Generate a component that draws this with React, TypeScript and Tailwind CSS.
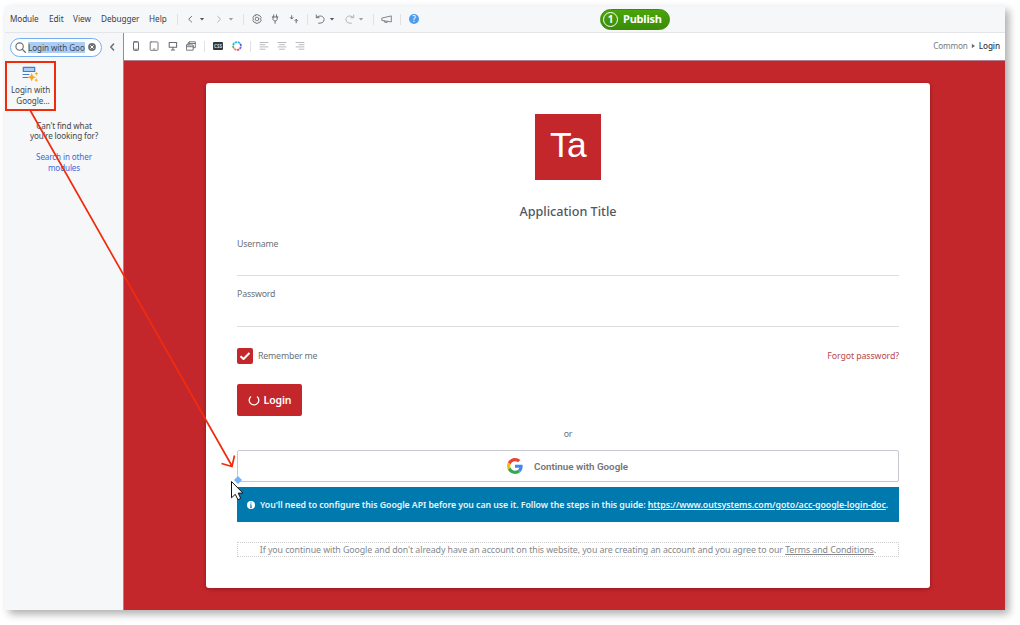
import type { ReactNode } from "react";

function Icon({ children, className = "", w = 10, h = 10, box }: { children: ReactNode; className?: string; w?: number; h?: number; box?: string }) {
  return (
    <svg width={w} height={h} viewBox={box ?? `0 0 ${w} ${h}`} fill="none" stroke="currentColor" strokeLinecap="round" strokeLinejoin="round" className={`shrink-0 ${className}`}>
      {children}
    </svg>
  );
}

const Sep = ({ className = "" }: { className?: string }) => <span className={`h-[11px] w-px shrink-0 bg-[#dfe1e4] ${className}`} />;

const Caret = ({ className = "" }: { className?: string }) => (
  <Icon w={6} h={6} className={className}>
    <path d="M.8 2h4.4L3 4.6z" fill="currentColor" stroke="none" />
  </Icon>
);

function MenuBar() {
  return (
    <header className="flex h-[27px] shrink-0 items-center border-b border-[#e3e5e8] bg-[#f6f7f9] pl-[5px] text-[8.2px] text-[#3d4045]">
      <span className="w-[39px] tracking-[-0.1px]">Module</span>
      <span className="w-[24px]">Edit</span>
      <span className="w-[28px]">View</span>
      <span className="w-[48px] tracking-[-0.05px]">Debugger</span>
      <span className="w-[28px]">Help</span>
      <Sep />
      <Icon className="ml-[7px] text-[#70747a]"><path d="M6.6 2.4 3.7 5.2l2.9 2.8" /></Icon>
      <Caret className="ml-[4px] text-[#55585d]" />
      <Icon className="ml-[9px] text-[#aeb1b5]"><path d="M3.7 2.4 6.6 5.2 3.7 8" /></Icon>
      <Caret className="ml-[4px] text-[#9b9ea2]" />
      <Sep className="ml-[9px]" />
      <Icon className="ml-[8px] text-[#707378]">
        <path d="M3.8.7h2.4l.5 1.1 1.3-.1 1.2 2-.7 1.3.7 1.3-1.2 2-1.3-.1-.5 1.1H3.8l-.5-1.1-1.3.1-1.2-2L1.5 5 .8 3.7l1.2-2 1.3.1z" strokeWidth=".9" />
        <circle cx="5" cy="5" r="1.8" strokeWidth=".9" />
      </Icon>
      <Icon className="ml-[8px] text-[#6a6d72]">
        <path d="M3.7.8v2M6.5.8v2M2.3 3h5.6M3 3v2.1c0 2.5 4.2 2.5 4.2 0V3M5.1 7v2.4" strokeWidth=".95" />
      </Icon>
      <Icon className="ml-[9px] text-[#606368]">
        <path d="M2.7 1.7v3M1.3 3.6l1.4 1.4 1.4-1.4M7.2 8.8V5.6M5.8 6.7l1.4-1.4 1.4 1.4" strokeWidth=".95" />
      </Icon>
      <Sep className="ml-[8px]" />
      <Icon className="ml-[7px] text-[#707378]">
        <path d="M1.3 1v2.7h2.7M1.5 3.5C5 .4 9.3 2.4 9.1 5.7 8.9 8.6 6 9.5 3.6 9.2" />
      </Icon>
      <Caret className="ml-[4px] text-[#55585d]" />
      <Icon className="ml-[10px] text-[#b1b4b8]">
        <path d="M8.7 1v2.7H6M8.5 3.5C5 .4.7 2.4.9 5.7 1.1 8.6 4 9.5 6.4 9.2" />
      </Icon>
      <Caret className="ml-[3px] text-[#9b9ea2]" />
      <Sep className="ml-[9px]" />
      <Icon w={12} className="ml-[7px] text-[#7b7e83]">
        <path d="M1.2 4 10.3 1.9v6L1.2 6.5zM3.2 6.8l.5 1.5 2.4.2.2-1.2" strokeWidth=".95" />
      </Icon>
      <Sep className="ml-[7px]" />
      <span className="ml-[8px] flex size-[10px] shrink-0 items-center justify-center rounded-full bg-[#4b9bf0] text-[8px] font-medium leading-none text-white">?</span>
      <button className="ml-[181px] flex h-[21px] w-[70px] shrink-0 items-center rounded-full border border-[#3b8a09] bg-gradient-to-b from-[#4ba50b] to-[#3b8c08] pl-[2px] text-[11px] font-bold text-white">
        <span className="flex size-[15px] shrink-0 items-center justify-center rounded-full border-[1.5px] border-white text-[10px] leading-none">1</span>
        <span className="ml-[5px] pb-px leading-none tracking-[-0.2px]">Publish</span>
      </button>
    </header>
  );
}

const ringColors = ["#3ea7f5", "#4069ed", "#8054ea", "#e3507a", "#ef8c45", "#50bc6c", "#22b8a4", "#25c3dc"];

function DesignerBar() {
  return (
    <div className="flex h-[28px] shrink-0 items-center border-b border-[#b27e8d] bg-white pb-px pl-[7px] text-[#686b70]">
      <Icon><rect x="2.5" y=".8" width="5" height="8.6" rx=".7" strokeWidth="1" /><path d="M3 1h4M3 8.2h4" strokeWidth=".8" /></Icon>
      <Icon className="ml-[8px]"><rect x="1.2" y=".9" width="7.8" height="8.4" rx=".8" strokeWidth=".9" /><path d="M4.3 8h1.6" strokeWidth=".8" /></Icon>
      <Icon className="ml-[9px]"><path d="M1.2 1.5h7.4v4.8H1.2zM4.9 6.5v2M3.3 9h3.3" strokeWidth="1.05" /></Icon>
      <Icon className="ml-[8px]"><path d="M.8 4h6.4v5.2H.8zM.8 5.7h6.4M3 3.8V.8h6.3v5.9H7.3M3 2.5h6.3M.8 4 3 1.2" strokeWidth=".9" /></Icon>
      <Sep className="ml-[8px]" />
      <span className="ml-[8px] flex h-[8px] w-[10px] shrink-0 items-center justify-center rounded-[1px] bg-[#34373b] text-[4.5px] font-bold leading-none text-[#d8d9da]">CSS</span>
      <Icon className="ml-[9px]">
        {ringColors.map((color, i) => (
          <circle key={color} cx="5" cy="5" r="3.9" stroke={color} strokeWidth="1.8" strokeLinecap="butt" strokeDasharray="2.4 24" transform={`rotate(${i * 45 - 80} 5 5)`} />
        ))}
      </Icon>
      <Sep className="ml-[8px]" />
      <Icon className="ml-[8px] text-[#b0b2b5]"><path d="M1 1.5h8M1 3.7h5M1 5.9h8M1 8.2h5" strokeWidth=".9" /></Icon>
      <Icon className="ml-[8px] text-[#b0b2b5]"><path d="M1 1.5h8M2.5 3.7h5M1 5.9h8M2.5 8.2h5" strokeWidth=".9" /></Icon>
      <Icon className="ml-[8px] text-[#b0b2b5]"><path d="M1 1.5h8M4 3.7h5M1 5.9h8M4 8.2h5" strokeWidth=".9" /></Icon>
      <div className="ml-auto flex items-center pr-[5px] text-[8.2px]">
        <span className="tracking-[-0.15px] text-[#777a7e]">Common</span>
        <Icon w={5} h={6} className="ml-[3.5px] mr-[2.5px]"><path d="M.8.8 4 3 .8 5.2z" fill="currentColor" stroke="none" /></Icon>
        <span className="font-medium tracking-[-0.1px] text-[#33363b]">Login</span>
      </div>
    </div>
  );
}

function Toolbox() {
  return (
    <aside className="flex w-[118px] shrink-0 flex-col bg-[#f6f7f9] text-[8.1px] tracking-[-0.05px] text-[#44474b]">
      <div className="flex h-[28px] items-center pl-[5px]">
        <div className="flex h-[19px] w-[92px] items-center rounded-full border border-[#73aff1] bg-white pl-[4px]">
          <Icon w={11} h={11} className="text-[#686c70]"><circle cx="4.6" cy="4.6" r="3.7" strokeWidth="1.1" /><path d="m7.4 7.4 2.9 2.9" strokeWidth="1.3" /></Icon>
          <span className="ml-[2px] h-[11px] w-[57px] overflow-hidden whitespace-nowrap bg-[#aacdf5] leading-[12px]">Login with Google</span>
          <Icon w={8} h={8} className="ml-[3px]"><circle cx="4" cy="4" r="3.9" fill="#6d7176" stroke="none" /><path d="m2.7 2.7 2.6 2.6m0-2.6L2.7 5.3" stroke="white" strokeWidth="1" /></Icon>
        </div>
        <Icon w={8} h={10} className="ml-[6px] text-[#6a6d71]"><path d="M5.6 2 2.8 5l2.8 3" strokeWidth="1.5" /></Icon>
      </div>
      <div className="flex h-[50px] w-[51px] flex-col items-center border-2 border-[#f12c0d] pt-[3px] leading-[10.5px]">
        <Icon w={17} h={17}>
          <rect x="1.3" y="1.3" width="11.4" height="4.2" fill="#a8cdf7" stroke="#3f7dcc" strokeWidth="1.2" />
          <path d="M1 8.5h6M1 11.5h5" stroke="#3f7dcc" strokeWidth="1.1" />
          <path d="m9.7 7 1.3 3 3 1.3-3 1.3-1.3 3-1.3-3-3-1.3 3-1.3zM14.3 5.7l.6 1.4 1.4.6-1.4.6-.6 1.4-.6-1.4-1.4-.6 1.4-.6zM14.3 12.3l.6 1.3 1.3.6-1.3.6-.6 1.3-.6-1.3-1.3-.6 1.3-.6z" fill="#f8a81c" stroke="none" />
        </Icon>
        <span className="mt-[2px] whitespace-nowrap">Login with</span>
        <span className="ml-[5px] whitespace-nowrap">Google...</span>
      </div>
      <p className="mt-[9.5px] text-center leading-[10.5px] tracking-[-0.12px]">Can't find what<br />you're looking for?</p>
      <p className="mt-[10.5px] text-center leading-[10.5px] tracking-[-0.12px] text-[#4169df]">Search in other<br />modules</p>
    </aside>
  );
}

function GoogleLogo() {
  return (
    <svg width="16" height="16" viewBox="0 0 48 48" className="shrink-0">
      <path fill="#EA4335" d="M24 9.5c3.54 0 6.71 1.22 9.21 3.6l6.85-6.85C35.9 2.38 30.47 0 24 0 14.62 0 6.51 5.38 2.56 13.22l7.98 6.19C12.43 13.72 17.74 9.5 24 9.5z" />
      <path fill="#4285F4" d="M46.98 24.55c0-1.57-.15-3.09-.38-4.55H24v9.02h12.94c-.58 2.96-2.26 5.48-4.78 7.18l7.73 6c4.51-4.18 7.09-10.36 7.09-17.65z" />
      <path fill="#FBBC05" d="M10.53 28.59A14.5 14.5 0 0 1 9.77 24c0-1.6.27-3.14.76-4.59l-7.98-6.19A24 24 0 0 0 0 24c0 3.88.92 7.54 2.56 10.78z" />
      <path fill="#34A853" d="M24 48c6.48 0 11.93-2.13 15.89-5.81l-7.73-6c-2.15 1.45-4.92 2.3-8.16 2.3-6.26 0-11.57-4.22-13.47-9.91l-7.98 6.19C6.51 42.62 14.62 48 24 48z" />
    </svg>
  );
}

function LoginCard() {
  return (
    <main className="ml-[82px] mt-[22px] flex h-[505px] w-[724px] flex-col rounded-[3px] bg-white px-[31px] pt-[31px] text-[8.8px] leading-[12px] tracking-[-0.18px] text-[#6a7178] shadow-[0_1px_4px_rgba(70,0,0,0.4)]">
      <div className="flex size-[66px] shrink-0 items-start justify-center self-center bg-[#c3272b] pt-[13px] font-['Liberation_Sans',sans-serif] text-[35.5px] leading-[36px] tracking-[-0.8px] text-white">Ta</div>
      <h1 className="mt-[24px] self-center text-[12.6px] font-medium leading-[16px] tracking-normal text-[#50585f]">Application Title</h1>
      <label className="mt-[18px]">Username</label>
      <div className="h-[26px] border-b border-[#dcdee1]" />
      <label className="mt-[12px]">Password</label>
      <div className="h-[27px] border-b border-[#dcdee1]" />
      <div className="mt-[21px] flex h-[16px] items-center">
        <span className="flex size-[16px] items-center justify-center rounded-[2px] bg-[#c3272b]">
          <Icon w={12} h={10} className="text-white"><path d="m1.5 5.2 3 2.8 6-6" strokeWidth="2" strokeLinecap="butt" /></Icon>
        </span>
        <span className="ml-[5px]">Remember me</span>
        <a className="ml-auto pb-px tracking-[-0.1px] text-[#b9484c]">Forgot password?</a>
      </div>
      <button className="mt-[20px] flex h-[32px] w-[65px] shrink-0 items-center justify-center rounded-[2px] bg-[#c3272b] text-[10.5px] font-semibold tracking-[-0.1px] text-white">
        <Icon w={12} h={12} className="mr-[4px]"><path d="M3 2.4A4.8 4.8 0 1 0 9 2.4" strokeWidth="1.3" strokeLinecap="butt" /></Icon>
        Login
      </button>
      <p className="mt-[12px] text-center">or</p>
      <button className="mt-[10px] flex h-[32px] shrink-0 items-center rounded-[2px] border border-[#c6c9ce] pl-[269px] font-['Roboto',sans-serif] text-[9.8px] font-semibold tracking-normal text-[#72757a]">
        <GoogleLogo />
        <span className="ml-[11px] pt-px">Continue with Google</span>
      </button>
      <div className="mt-[5px] flex h-[35px] shrink-0 items-center whitespace-nowrap bg-[#007aae] pl-[10px] text-[8.8px] font-semibold tracking-[-0.078px] text-[#e9f5fa]">
        <Icon w={8} h={8}><circle cx="4" cy="4" r="4" fill="#fff" stroke="none" /><path d="M4 1.4v1M3.2 3.7H4v2.5M3 6.3h2" stroke="#007aae" strokeWidth="1.1" strokeLinecap="butt" /></Icon>
        <span className="ml-[5px]">You'll need to configure this Google API before you can use it. Follow the steps in this guide: <a className="underline">https://www.outsystems.com/goto/acc-google-login-doc</a>.</span>
      </div>
      <p className="mt-[20px] flex h-[15px] shrink-0 items-center justify-center whitespace-nowrap border border-dotted border-[#cfcfcf] pt-px tracking-[-0.065px] text-[#83878b]">
        <span>If you continue with Google and don't already have an account on this website, you are creating an account and you agree to our <a className="underline">Terms and Conditions</a>.</span>
      </p>
    </main>
  );
}

export default function App() {
  return (
    <div className="relative h-[625px] w-[1020px] overflow-hidden bg-white pl-[5px] pt-[6px] font-['Noto_Sans',sans-serif]">
      <div className="flex h-[604px] w-[1000px] flex-col shadow-[4px_4px_8px_rgba(0,0,0,0.32)]">
        <MenuBar />
        <div className="flex min-h-0 flex-1">
          <Toolbox />
          <section className="flex min-w-0 flex-1 flex-col border-l border-[#b27e8d] bg-[#c3272b]">
            <DesignerBar />
            <LoginCard />
          </section>
        </div>
      </div>
      <svg width="260" height="520" viewBox="0 0 260 520" fill="none" className="pointer-events-none absolute left-0 top-0">
        <path d="M30 110 232 466M221.5 463.5 232 466.5l2.5-11" stroke="#f12c0d" strokeWidth="1.7" />
        <path d="m238 476 4 4-4 4-4-4z" fill="#74b3f5" />
        <path d="M231.5 481.5v16.3l3.8-3.5 2.6 5.4 2.8-1.3-2.5-5.3h4.7z" fill="#fff" stroke="#10131d" strokeWidth="1" />
      </svg>
    </div>
  );
}
